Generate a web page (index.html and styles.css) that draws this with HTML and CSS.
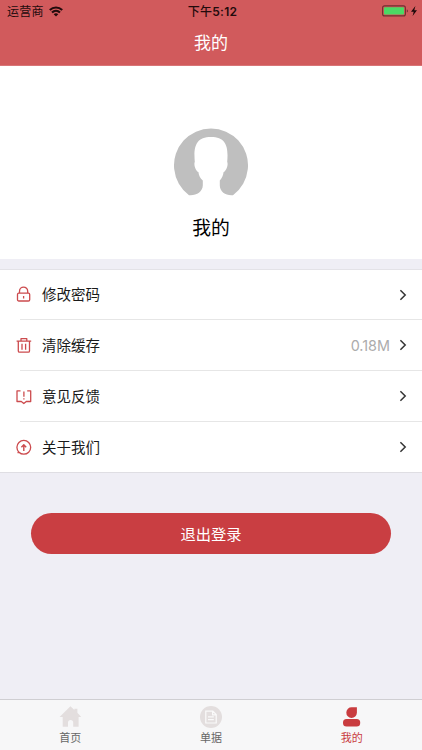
FILE: index.html
```html
<!DOCTYPE html>
<html lang="zh-CN">
<head>
<meta charset="utf-8">
<meta name="viewport" content="width=device-width, initial-scale=1">
<title>我的</title>
<link rel="stylesheet" href="styles.css">
</head>
<body>
<div class="app">
  <header class="header">
    <div class="status">
      <div class="carrier"><span>运营商</span>
        <svg width="14" height="11" viewBox="0 0 14 11" fill="none" stroke="#220b0c" stroke-width="2.1"><path d="M.8 4.1C4.3.7 9.700.7 13.200 4.100M3 6.500c2.300-2.200 5.700-2.200 8 0"/><path d="M7 10.500 4.700 8.200c1.300-1.200 3.300-1.200 4.600 0z" fill="#220b0c" stroke="none"/></svg>
      </div>
      <div class="time">下午<b>5:12</b></div>
      <div class="power">
        <svg width="36" height="12" viewBox="0 0 36 12"><rect x=".6" y=".9" width="22.800" height="10" rx="2" fill="none" stroke="#712e30" stroke-width="1.100"/><rect x="2" y="2.200" width="20" height="7.400" rx=".8" fill="#4bd964"/><path d="M24.800 4.200c1.500.5 1.500 2.900 0 3.400z" fill="#712e30"/><path d="M33.400 1 29 6.700h2.700L30.600 11 35 5.200h-2.700z" fill="#1c090a"/></svg>
      </div>
    </div>
    <h1 class="title">我的</h1>
  </header>

  <section class="profile">
    <svg class="avatar" width="74" height="68" viewBox="0 0 74 68"><path fill="#bfbfbf" d="M15 67.200A37 37 0 1 1 59 67.200C52 67.900 46 64 45.800 57.500V52.500C47.800 50.500 49.200 47.500 49.600 44 52 43.300 54.600 36.500 53.200 34 54.500 19 52.500 8.900 37 8.900S19.500 19 20.800 34C19.400 36.500 22 43.300 24.400 44 24.800 47.500 26.200 50.500 28.800 52.500V57.500C28.500 64 22 67.900 15 67.200Z"/></svg>
    <div class="name">我的</div>
  </section>

  <main class="list">
    <div class="row">
      <svg class="icon" width="16" height="17" viewBox="0 0 16 17"><rect x="1.500" y="7.200" width="12.200" height="7.800" rx="1.300"/><path d="M3.500 7V5.200a4.100 4.100 0 0 1 8.200 0V7M7.600 10v2.500"/></svg>
      <span class="label">修改密码</span>
      <svg class="chevron" width="8" height="12" viewBox="0 0 8 12"><path d="m1.400 1.200 4.800 4.800-4.800 4.800"/></svg>
    </div>
    <div class="row">
      <svg class="icon" width="16" height="17" viewBox="0 0 16 17"><path d="M.6 4.200h14.600M5 3.800V1.700h5.800v2.100M2.300 4.500V13.900q0 1.300 1.300 1.300h8.600q1.300 0 1.300-1.300V4.500M6 6.700v6M9.600 6.700v6"/></svg>
      <span class="label">清除缓存</span><span class="value">0.18M</span>
      <svg class="chevron" width="8" height="12" viewBox="0 0 8 12"><path d="m1.400 1.200 4.800 4.800-4.800 4.800"/></svg>
    </div>
    <div class="row">
      <svg class="icon" width="16" height="17" viewBox="0 0 16 17"><path d="M4.500 2.800H1v10.700h4.300l2.500 2 2.500-2h4.400V2.800h-3.500M7.900 3.600v5.200M7.900 10.200v1.400"/></svg>
      <span class="label">意见反馈</span>
      <svg class="chevron" width="8" height="12" viewBox="0 0 8 12"><path d="m1.400 1.200 4.800 4.800-4.800 4.800"/></svg>
    </div>
    <div class="row">
      <svg class="icon" width="16" height="17" viewBox="0 0 16 17"><circle cx="7.800" cy="8.300" r="6.900"/><path d="m2.600 12.800-.8 1.500"/><path d="M7.800 12V6M5.400 8.200l2.400-2.400 2.400 2.400" stroke-width="1.400"/></svg>
      <span class="label">关于我们</span>
      <svg class="chevron" width="8" height="12" viewBox="0 0 8 12"><path d="m1.400 1.200 4.800 4.800-4.800 4.800"/></svg>
    </div>
  </main>

  <button class="logout">退出登录</button>

  <nav class="tabs">
    <div class="tab">
      <svg width="24" height="24" viewBox="0 0 24 24"><path d="m12.400 1.200 4 3.700V3.800h3v4l3.800 4.200h-2.600v9.700h-5.400v-4.200a2.600 2.600 0 0 0-5.200 0v4.200H4.700V12H1.600z" fill="#e3dede"/></svg>
      <span>首页</span>
    </div>
    <div class="tab">
      <svg width="24" height="24" viewBox="0 0 24 24"><circle cx="12" cy="12" r="11" fill="#e3dede"/><path d="M6.800 6.200h7l3.400 3.400v8.400H6.800zM13.600 6.200v3.600h3.600M9 11.800h5.800M9 14.700h5.800" fill="none" stroke="#fafafa" stroke-width="1.200"/></svg>
      <span>单据</span>
    </div>
    <div class="tab active">
      <svg width="24" height="24" viewBox="0 0 24 24"><path d="M11.700 2.300h5.200v5.500a5.300 5.300 0 1 1-5.200-5.500z" fill="#c93c3f"/><rect x="3" y="14" width="17.200" height="7.600" rx="3.600" fill="#c93c3f"/></svg>
      <span>我的</span>
    </div>
  </nav>
</div>
</body>
</html>
```

FILE: styles.css
```css
* { box-sizing: border-box; }
body {
  margin: 0;
  font-family: Inter, "Noto Sans CJK SC", sans-serif;
  background: #efeef5;
}
svg { display: block; }
.app {
  width: 422px;
  height: 750px;
  display: flex;
  flex-direction: column;
  background: #efeef5;
  overflow: hidden;
}
.header {
  height: 66px;
  flex: none;
  background: #d15a5c;
  border-bottom: 1px solid #d87577;
}
.status {
  height: 22px;
  display: grid;
  grid-template-columns: 1fr auto 1fr;
  align-items: center;
  padding: 0 4px 0 7px;
  color: #220b0c;
  font-size: 12px;
  line-height: 22px;
}
.carrier { display: flex; align-items: center; gap: 5px; letter-spacing: .2px; }
.time { font-weight: 500; letter-spacing: .3px; padding-top: 1px; }
.time b { font-weight: 600; }
.carrier span { padding-top: 1px; }
.carrier svg, .power svg { margin-top: -1px; }
.power { justify-self: end; }
.title {
  margin: 0;
  color: #fff;
  font-size: 17px;
  font-weight: 400;
  line-height: 43px;
  text-align: center;
}
.profile {
  height: 193px;
  flex: none;
  display: flex;
  flex-direction: column;
  align-items: center;
  padding-top: 62px;
  background: #fff;
}
.name { margin-top: 19px; font-size: 18.800px; line-height: 28px; color: #000; }
.list {
  height: 204px;
  flex: none;
  margin-top: 10px;
  background: #fff;
  border-top: 1px solid #e3e2e7;
  border-bottom: 1px solid #dfdee3;
}
.row {
  height: 51px;
  display: flex;
  align-items: center;
  margin-left: 20px;
  padding-right: 15px;
  border-bottom: 1px solid #e6e6e6;
}
.row:first-child { height: 50px; }
.row:last-child { border-bottom: 0; padding-bottom: 1px; }
.icon {
  flex: none;
  margin-left: -4.500px;
  fill: none;
  stroke: #cc4b4e;
  stroke-width: 1.3;
  stroke-linejoin: round;
}
.label { margin-left: 10.500px; color: #1a1a1a; font-size: 14.500px; line-height: 22px; }
.row + .row .label { padding-top: 1px; }
.value { margin-left: auto; color: #acacac; font-size: 14.400px; }
.chevron { margin-left: auto; fill: none; stroke: #353535; stroke-width: 1.5; }
.value + .chevron { margin-left: 9px; }
.logout {
  width: 360px;
  height: 41px;
  flex: none;
  margin: 40px 0 0 31px;
  padding: 0;
  border: 0;
  border-radius: 21px;
  background: #c93e42;
  color: #fff;
  font: 400 15.300px/41px "Noto Sans CJK SC", sans-serif;
}
.tabs {
  height: 51px;
  flex: none;
  margin-top: auto;
  display: grid;
  grid-template-columns: repeat(3, 1fr);
  border-top: 1px solid #cfced2;
  background: #f7f7f8;
}
.tab {
  display: flex;
  flex-direction: column;
  align-items: center;
  padding-top: 5px;
  color: #666;
  font-size: 11px;
  line-height: 18px;
}
.active { color: #c93c3f; }
```
